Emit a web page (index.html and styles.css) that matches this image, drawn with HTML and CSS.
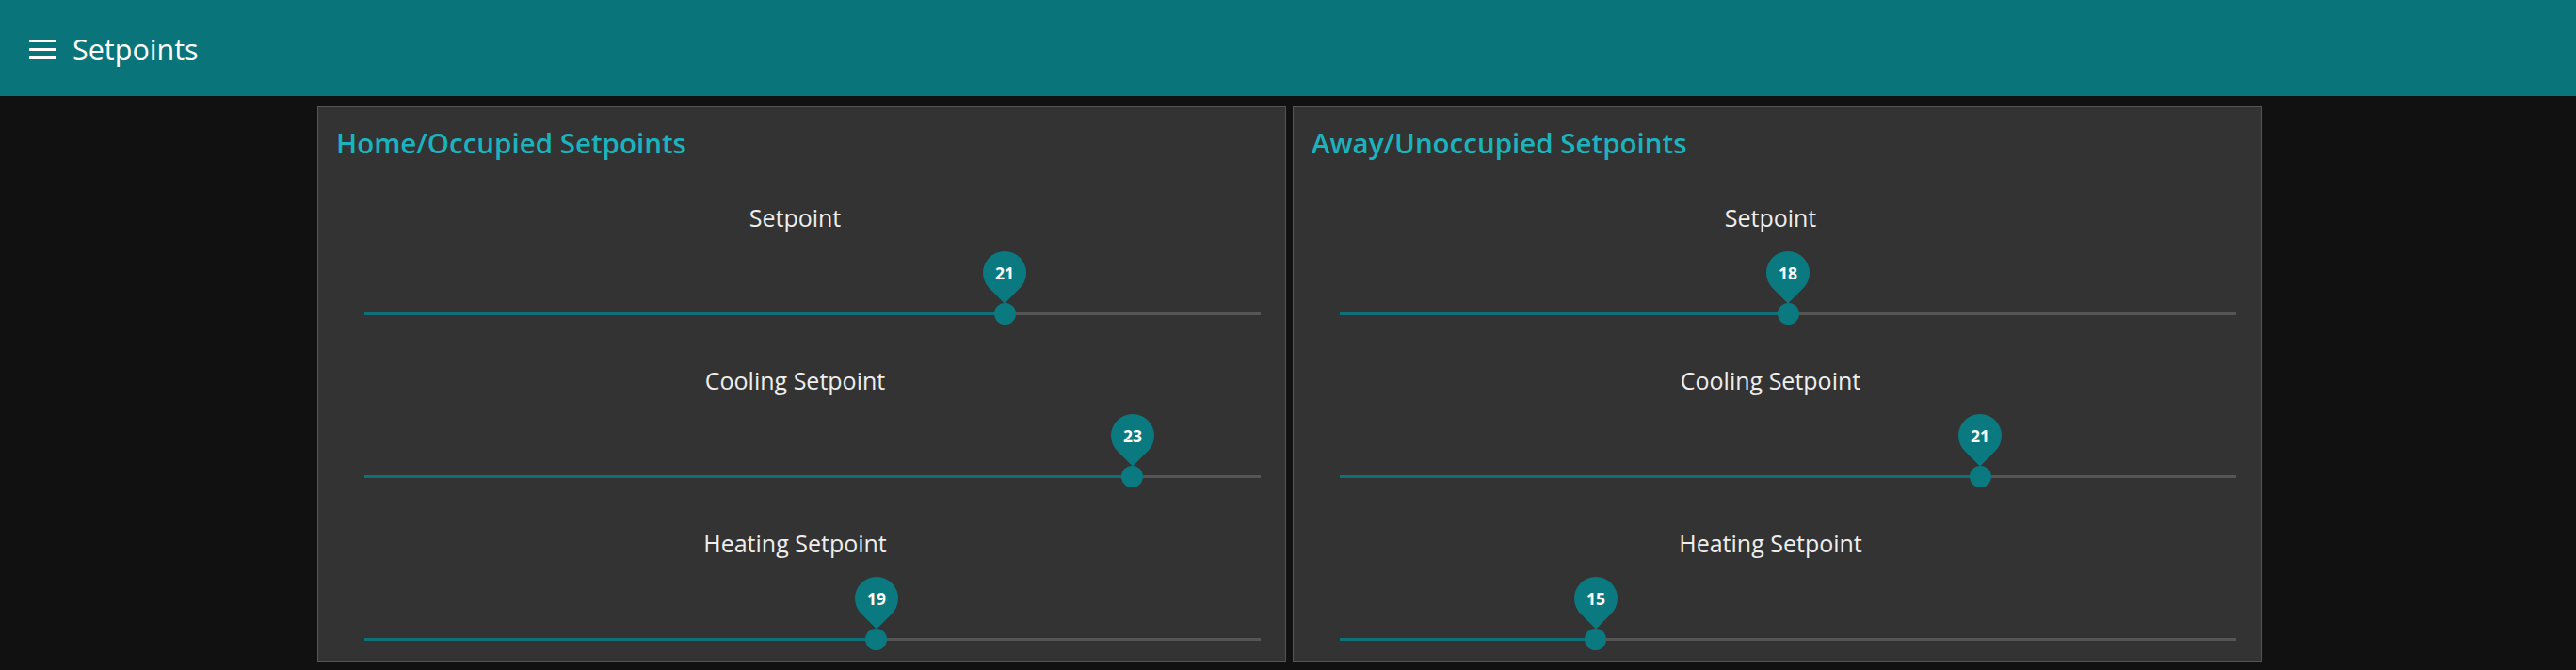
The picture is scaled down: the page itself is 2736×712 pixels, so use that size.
FILE: index.html
```html
<!DOCTYPE html>
<html>
<head>
<meta charset="utf-8">
<link rel="stylesheet" href="styles.css">
</head>
<body>
<header class="topbar">
  <svg class="menu-icon" width="30" height="24" viewBox="0 0 30 24">
    <rect x="0" y="2" width="29" height="3" fill="#fff"/>
    <rect x="0" y="11" width="29" height="3" fill="#fff"/>
    <rect x="0" y="20" width="29" height="3" fill="#fff"/>
  </svg>
  <span class="topbar-title">Setpoints</span>
</header>
<main class="content">
  <section class="card">
    <h2 class="card-title">Home/Occupied Setpoints</h2>
    <div class="row">
      <div class="label">Setpoint</div>
      <div class="slider">
        <div class="track"><div class="active" style="width:71.43%"></div><div class="rest"></div></div>
        <div class="thumb" style="left:71.43%"><div class="pin"></div><span class="val">21</span></div>
      </div>
    </div>
    <div class="row">
      <div class="label">Cooling Setpoint</div>
      <div class="slider">
        <div class="track"><div class="active" style="width:85.71%"></div><div class="rest"></div></div>
        <div class="thumb" style="left:85.71%"><div class="pin"></div><span class="val">23</span></div>
      </div>
    </div>
    <div class="row">
      <div class="label">Heating Setpoint</div>
      <div class="slider">
        <div class="track"><div class="active" style="width:57.14%"></div><div class="rest"></div></div>
        <div class="thumb" style="left:57.14%"><div class="pin"></div><span class="val">19</span></div>
      </div>
    </div>
  </section>
  <section class="card">
    <h2 class="card-title">Away/Unoccupied Setpoints</h2>
    <div class="row">
      <div class="label">Setpoint</div>
      <div class="slider">
        <div class="track"><div class="active" style="width:50%"></div><div class="rest"></div></div>
        <div class="thumb" style="left:50%"><div class="pin"></div><span class="val">18</span></div>
      </div>
    </div>
    <div class="row">
      <div class="label">Cooling Setpoint</div>
      <div class="slider">
        <div class="track"><div class="active" style="width:71.43%"></div><div class="rest"></div></div>
        <div class="thumb" style="left:71.43%"><div class="pin"></div><span class="val">21</span></div>
      </div>
    </div>
    <div class="row">
      <div class="label">Heating Setpoint</div>
      <div class="slider">
        <div class="track"><div class="active" style="width:28.57%"></div><div class="rest"></div></div>
        <div class="thumb" style="left:28.57%"><div class="pin"></div><span class="val">15</span></div>
      </div>
    </div>
  </section>
</main>
</body>
</html>
```

FILE: styles.css
```css
html, body {
  margin: 0;
  padding: 0;
  background: #111111;
  font-family: "Open Sans", "Noto Sans", sans-serif;
  color: #eeeeee;
  overflow: hidden;
}
.topbar {
  height: 102px;
  background: #097479;
  display: flex;
  align-items: center;
  padding-left: 31px;
  box-sizing: border-box;
}
.menu-icon {
  display: block;
  margin-top: 2px;
}
.topbar-title {
  margin-left: 16px;
  font-size: 30.5px;
  color: #ffffff;
  line-height: 40px;
  margin-top: 2px;
}
.content {
  display: flex;
  justify-content: center;
  gap: 7px;
  padding-top: 11px;
  padding-left: 3px;
}
.card {
  width: 1029px;
  height: 590px;
  box-sizing: border-box;
  border: 1px solid #555555;
  background: #333333;
  display: flex;
  flex-direction: column;
  overflow: hidden;
}
.card-title {
  flex-shrink: 0;
  margin: 0;
  height: 102px;
  box-sizing: border-box;
  padding: 18px 0 0 19px;
  font-size: 29.5px;
  font-weight: 600;
  line-height: 40px;
  color: #1ab3be;
}
.row {
  flex-shrink: 0;
  display: flex;
  flex-direction: column;
  margin-bottom: 39px;
}
.label {
  height: 34px;
  line-height: 31px;
  font-size: 25px;
  text-align: center;
  padding-right: 14px;
}
.slider {
  position: relative;
  height: 100px;
  margin: 0 26px 0 49px;
}
.track {
  position: absolute;
  left: 0;
  right: 0;
  top: 82px;
  height: 3px;
  display: flex;
}
.active {
  background: #0d7278;
}
.rest {
  flex: 1;
  background: #555555;
}
.thumb {
  position: absolute;
  top: 72px;
  width: 23px;
  height: 23px;
  margin-left: -11.5px;
  border-radius: 50%;
  background: #0b7a80;
}
.pin {
  position: absolute;
  left: -11.5px;
  top: -55px;
  width: 46px;
  height: 46px;
  border-radius: 50% 50% 0 50%;
  background: #0b7a80;
  transform: rotate(45deg);
}
.val {
  position: absolute;
  left: -20px;
  width: 63px;
  top: -46px;
  height: 28px;
  line-height: 28px;
  text-align: center;
  font-size: 17.5px;
  font-weight: 700;
  color: #ffffff;
}
```
